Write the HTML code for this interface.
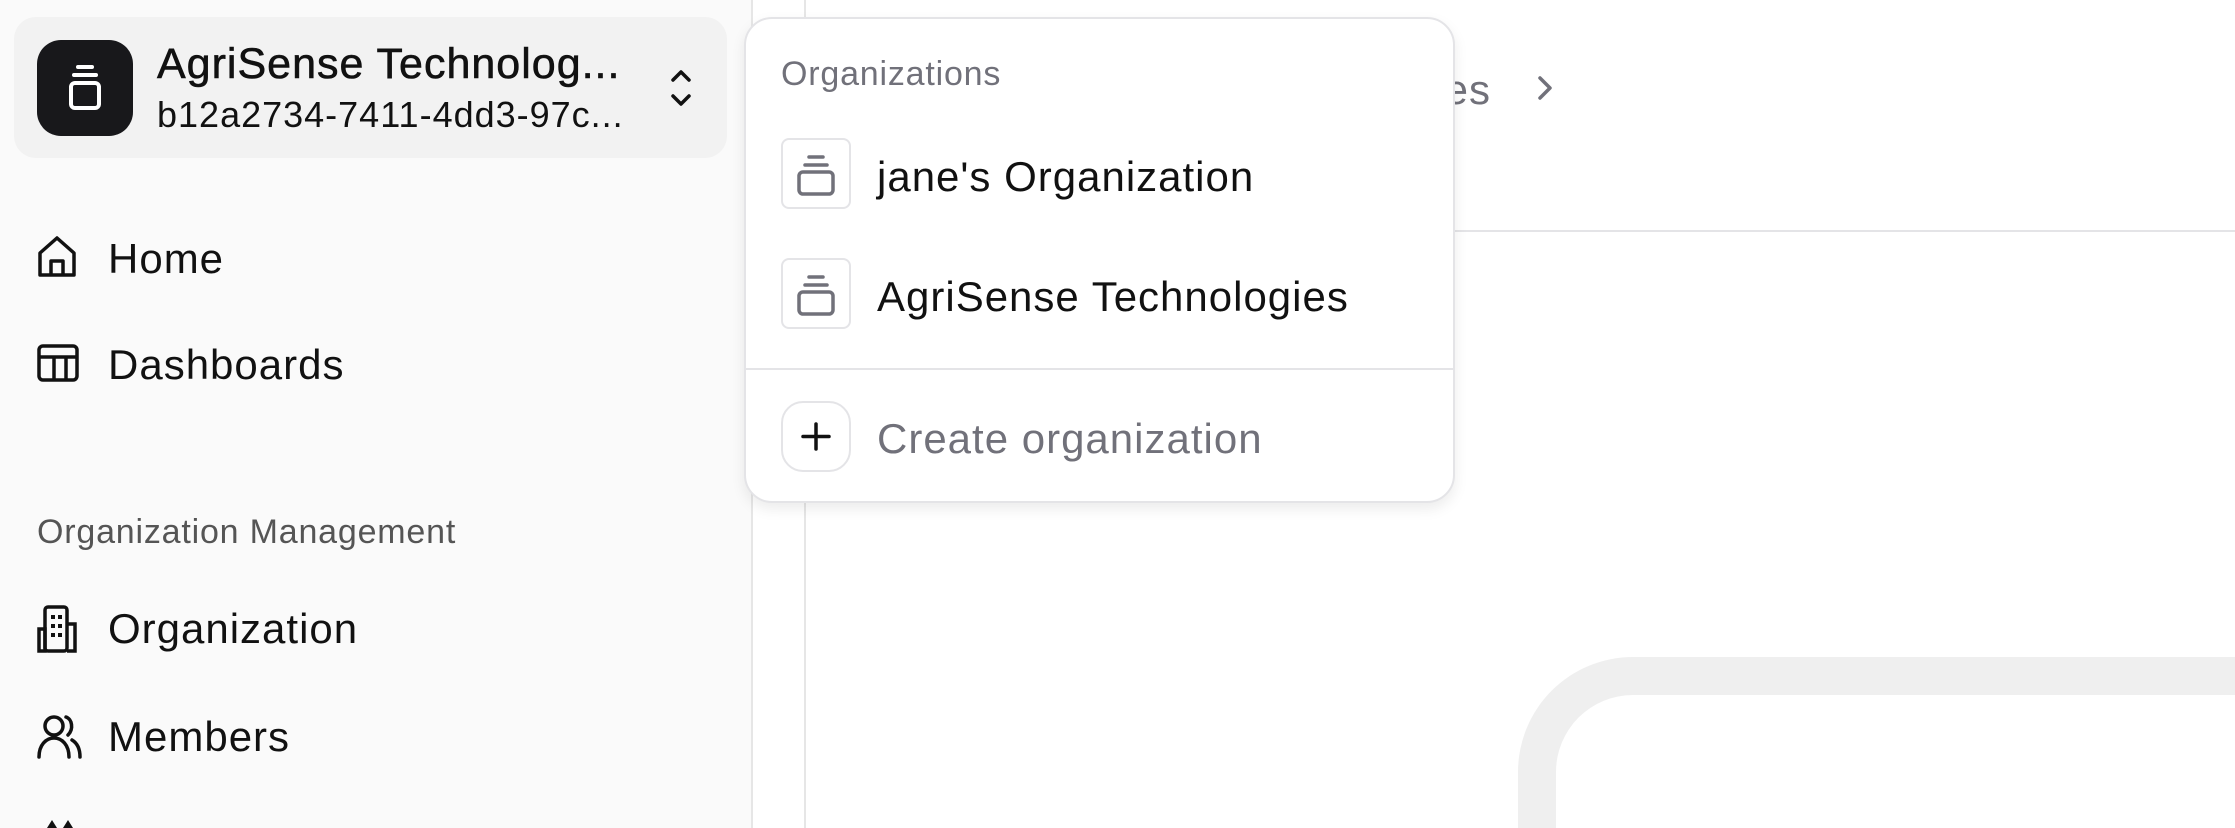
<!DOCTYPE html>
<html><head><meta charset="utf-8"><style>
*{box-sizing:border-box;margin:0;padding:0}
html,body{width:2235px;height:828px;overflow:hidden}
body{background:#fff;font-family:"Liberation Sans",sans-serif;color:#111}
#w{position:relative;width:2235px;height:828px;overflow:hidden}
.abs{position:absolute}
.side{left:0;top:0;width:753px;height:828px;background:#fafafa;border-right:2px solid #e6e6e6}
.sw{left:14px;top:17px;width:713px;height:141px;background:#f2f2f2;border-radius:22px}
.logo{left:37px;top:40px;width:96px;height:96px;background:#18181b;border-radius:24px}
.t{white-space:nowrap;line-height:1}
.nav{font-size:42px;color:#111;letter-spacing:1px}
.dd{left:744px;top:17px;width:711px;height:486px;background:#fff;border:2px solid #e4e4e7;border-radius:28px;box-shadow:0 6px 14px rgba(0,0,0,.08)}
.ib{width:70px;height:71px;border:2px solid #e4e4e7;border-radius:8px;background:#fff}
</style></head><body><div id="w">
<div class="abs side"></div>
<div class="abs sw"></div>
<div class="abs logo">
<svg width="96" height="96" viewBox="0 0 96 96"><g fill="none" stroke="#fff" stroke-width="4" stroke-linecap="round"><line x1="41" y1="27" x2="55" y2="27"/><line x1="37" y1="35" x2="59" y2="35"/><rect x="34" y="43" width="28" height="25" rx="4"/></g></svg>
</div>
<div class="abs t" style="left:157px;top:43px;font-size:43px;color:#111;letter-spacing:1px;-webkit-text-stroke:0.6px #111">AgriSense Technolog...</div>
<div class="abs t" style="left:157px;top:97px;font-size:36px;color:#111;letter-spacing:1px">b12a2734-7411-4dd3-97c...</div>
<svg class="abs" style="left:666px;top:66px" width="30" height="44" viewBox="0 0 30 44"><g fill="none" stroke="#111" stroke-width="3.5" stroke-linecap="round" stroke-linejoin="round"><polyline points="7,14 15,6 23,14"/><polyline points="7,30 15,38 23,30"/></g></svg>

<svg class="abs" style="left:36px;top:233px" width="46" height="48" viewBox="0 0 46 48"><path d="M4 20 L21 5 L38 20 V42 H4 Z M15 42 V28 H27 V42" fill="none" stroke="#111" stroke-width="3.5" stroke-linejoin="round"/></svg>
<div class="abs t nav" style="left:108px;top:238px">Home</div>
<svg class="abs" style="left:36px;top:343px" width="46" height="42" viewBox="0 0 46 42"><g fill="none" stroke="#111" stroke-width="3.5"><rect x="3" y="3" width="38" height="34" rx="4"/><path d="M3 14 H41 M18 14 V37 M30 14 V37"/></g></svg>
<div class="abs t nav" style="left:108px;top:344px">Dashboards</div>
<div class="abs t" style="left:37px;top:515px;font-size:34px;color:#555;letter-spacing:0.8px">Organization Management</div>
<svg class="abs" style="left:36px;top:604px" width="46" height="50" viewBox="0 0 46 50"><g fill="none" stroke="#111" stroke-width="3.5"><rect x="9" y="3" width="22" height="44" rx="3"/><path d="M31 20 H39 V47 H31 M3 25 H9 V47 H3 Z"/></g><g fill="#111"><rect x="15" y="11" width="4" height="4"/><rect x="22" y="11" width="4" height="4"/><rect x="15" y="20" width="4" height="4"/><rect x="22" y="20" width="4" height="4"/><rect x="15" y="29" width="4" height="4"/><rect x="22" y="29" width="4" height="4"/></g></svg>
<div class="abs t nav" style="left:108px;top:608px">Organization</div>
<svg class="abs" style="left:36px;top:713px" width="50" height="46" viewBox="0 0 50 46"><g fill="none" stroke="#111" stroke-width="3.5" stroke-linecap="round"><circle cx="18" cy="13" r="9"/><path d="M3 44 C3 32 10 25 18 25 C26 25 33 32 33 44 M30 4 C36 6 38 16 32 22 M36 27 C41 30 44 36 44 44"/></g></svg>
<div class="abs t nav" style="left:108px;top:716px">Members</div>
<svg class="abs" style="left:44px;top:819px" width="34" height="9"><path d="M3 9 L8 1 L13 9 M19 9 L24 1 L29 9" fill="#111"/></svg>

<div class="abs" style="left:804px;top:0;width:2px;height:828px;background:#e6e6e6"></div>
<div class="abs" style="left:805px;top:230px;width:1430px;height:2px;background:#e4e4e7"></div>
<div class="abs t" style="left:1191px;width:300px;text-align:right;top:69px;font-size:42px;color:#71717a;letter-spacing:1px">Services</div>
<svg class="abs" style="left:1533px;top:72px" width="24" height="32"><polyline points="7,6 17,16 7,26" fill="none" stroke="#71717a" stroke-width="3.5" stroke-linecap="round" stroke-linejoin="round"/></svg>
<div class="abs" style="left:1518px;top:657px;width:717px;height:171px;border:38px solid #efefef;border-bottom:0;border-right:0;border-radius:115px 0 0 0"></div>

<div class="abs dd">
<div class="abs t" style="left:35px;top:38px;font-size:34px;color:#71717a;letter-spacing:0.8px">Organizations</div>
<div class="abs ib" style="left:35px;top:119px"><svg width="66" height="67" viewBox="0 0 66 67"><g fill="none" stroke="#71717a" stroke-width="3.5" stroke-linecap="round"><line x1="26" y1="17" x2="40" y2="17"/><line x1="22" y1="25" x2="44" y2="25"/><rect x="16" y="32" width="34" height="22" rx="4"/></g></svg></div>
<div class="abs t nav" style="left:131px;top:137px">jane's Organization</div>
<div class="abs ib" style="left:35px;top:239px"><svg width="66" height="67" viewBox="0 0 66 67"><g fill="none" stroke="#71717a" stroke-width="3.5" stroke-linecap="round"><line x1="26" y1="17" x2="40" y2="17"/><line x1="22" y1="25" x2="44" y2="25"/><rect x="16" y="32" width="34" height="22" rx="4"/></g></svg></div>
<div class="abs t nav" style="left:131px;top:257px">AgriSense Technologies</div>
<div class="abs" style="left:0;top:349px;width:707px;height:2px;background:#e4e4e7"></div>
<div class="abs ib" style="left:35px;top:382px;border-radius:22px"><svg width="66" height="67" viewBox="0 0 66 67"><g stroke="#111" stroke-width="3.5" stroke-linecap="round"><line x1="33" y1="21" x2="33" y2="46"/><line x1="20" y1="33.5" x2="46" y2="33.5"/></g></svg></div>
<div class="abs t nav" style="left:131px;top:399px;color:#71717a">Create organization</div>
</div>
</div></body></html>
